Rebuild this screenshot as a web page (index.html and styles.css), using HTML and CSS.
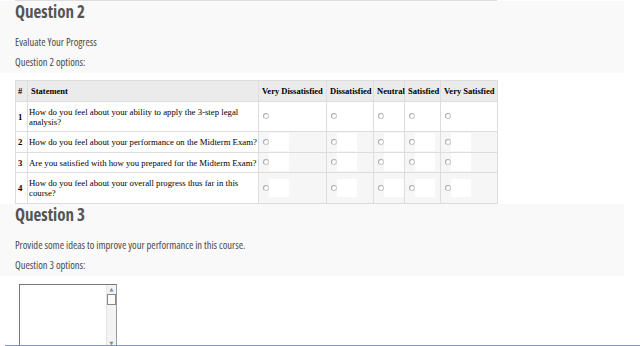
FILE: index.html
```html
<!DOCTYPE html>
<html lang="en">

<head>
  <meta charset="utf-8">
  <title>Course Survey</title>
  <link rel="stylesheet" href="styles.css">
</head>

<body>
<div class="prev-rule"></div>

<div class="question">
  <h2>Question 2</h2>
  <p>Evaluate Your Progress</p>
  <p>Question 2 options:</p>
</div>

<table class="likert">
  <colgroup>
    <col class="c-num">
    <col class="c-text">
    <col class="c-vd">
    <col class="c-d">
    <col class="c-n">
    <col class="c-s">
    <col class="c-vs">
  </colgroup>
  <tr>
    <th>#</th>
    <th>Statement</th>
    <th>Very Dissatisfied</th>
    <th>Dissatisfied</th>
    <th>Neutral</th>
    <th>Satisfied</th>
    <th>Very Satisfied</th>
  </tr>
  <tr>
    <td class="num">1</td>
    <td class="stmt">How do you feel about your ability to apply the 3-step legal analysis?</td>
    <td class="opt"><input type="radio" name="s1"><span class="pad"></span></td>
    <td class="opt"><input type="radio" name="s1"><span class="pad"></span></td>
    <td class="opt"><input type="radio" name="s1"><span class="pad"></span></td>
    <td class="opt"><input type="radio" name="s1"><span class="pad"></span></td>
    <td class="opt"><input type="radio" name="s1"><span class="pad"></span></td>
  </tr>
  <tr>
    <td class="num">2</td>
    <td class="stmt single">How do you feel about your performance on the Midterm Exam?</td>
    <td class="opt"><input type="radio" name="s2"><span class="pad"></span></td>
    <td class="opt"><input type="radio" name="s2"><span class="pad"></span></td>
    <td class="opt"><input type="radio" name="s2"><span class="pad"></span></td>
    <td class="opt"><input type="radio" name="s2"><span class="pad"></span></td>
    <td class="opt"><input type="radio" name="s2"><span class="pad"></span></td>
  </tr>
  <tr>
    <td class="num">3</td>
    <td class="stmt single">Are you satisfied with how you prepared for the Midterm Exam?</td>
    <td class="opt"><input type="radio" name="s3"><span class="pad"></span></td>
    <td class="opt"><input type="radio" name="s3"><span class="pad"></span></td>
    <td class="opt"><input type="radio" name="s3"><span class="pad"></span></td>
    <td class="opt"><input type="radio" name="s3"><span class="pad"></span></td>
    <td class="opt"><input type="radio" name="s3"><span class="pad"></span></td>
  </tr>
  <tr>
    <td class="num">4</td>
    <td class="stmt">How do you feel about your overall progress thus far in this course?</td>
    <td class="opt"><input type="radio" name="s4"><span class="pad"></span></td>
    <td class="opt"><input type="radio" name="s4"><span class="pad"></span></td>
    <td class="opt"><input type="radio" name="s4"><span class="pad"></span></td>
    <td class="opt"><input type="radio" name="s4"><span class="pad"></span></td>
    <td class="opt"><input type="radio" name="s4"><span class="pad"></span></td>
  </tr>
</table>

<div class="question">
  <h2>Question 3</h2>
  <p>Provide some ideas to improve your performance in this course.</p>
  <p>Question 3 options:</p>
</div>

<div class="answer">
  <textarea></textarea>
  <div class="scroll">
    <span class="arrow">&#9650;</span>
    <span class="thumb"></span>
    <span class="track"></span>
    <span class="arrow">&#9660;</span>
  </div>
</div>

<div class="frame-edge"></div>
</body>

</html>
```

FILE: styles.css
```css
body { background: white; margin: 0; padding: 0; overflow: hidden; height: 346px }

/* bottom border of the table above */
.prev-rule { border-top: 1px solid #ddd; margin-left: 15px; width: 482px }

/* Question header blocks */

.question {
  background: #f9f9f9;
  width: 609px;
  padding: 1px 0 5px 15px;
  font-family: "Open Sans", sans-serif;
  font-stretch: 75%;
  color: #4a4a4a;
}

.question h2 {
  margin: 0 0 14px;
  font-size: 17px;
  line-height: 20px;
  font-weight: bold;
  color: #555;
}

.question p {
  margin: 0 0 8px;
  font-size: 10.5px;
  line-height: 12px;
}

.question p:last-child { margin-bottom: 0 }

/* Likert table */

table.likert {
  border-collapse: collapse;
  table-layout: fixed;
  width: 482px;
  margin: 7px 0 0 15px;
  font-family: "Liberation Serif", "Times New Roman", serif;
  font-size: 8.75px;
  line-height: 10px;
  color: #000;
}

col.c-num { width: 12px }
col.c-text { width: 231px }
col.c-vd { width: 68px }
col.c-d { width: 47px }
col.c-n { width: 31px }
col.c-s { width: 36px }
col.c-vs { width: 57px }

table.likert th, table.likert td {
  border: 1px solid #ddd;
  padding: 5px 3px 4.5px;
  text-align: left;
  vertical-align: middle;
}

table.likert th { background: #ebebeb; font-size: 8.5px; font-weight: bold; white-space: nowrap }
table.likert th:first-child { padding: 5px 2px 4.5px }
table.likert td { background: white }
table.likert td.num { font-weight: bold; padding: 5px 2px 4.5px }
table.likert td.stmt { padding: 5px 0 4.5px 1px }
table.likert td.single { white-space: nowrap }
table.likert td.opt { padding: 0 0 0 4px; white-space: nowrap }
table.likert tr:nth-child(n+3) td.opt { background: #f6f6f6 }

table.likert input[type=radio] {
  -webkit-appearance: none;
  appearance: none;
  width: 6px;
  height: 6px;
  margin: 0;
  border: 1px solid #c8c8c8;
  border-top-color: #aaa;
  border-left-color: #aaa;
  border-radius: 50%;
  background: white;
  vertical-align: middle;
}

table.likert .pad {
  display: inline-block;
  width: 20px;
  height: 18px;
  background: white;
  vertical-align: middle;
}

/* Free text answer */

.answer {
  display: flex;
  width: 96px;
  height: 63px;
  margin: 8px 0 0 19px;
  border: 1px solid #999;
  border-top-color: #777;
  border-left-color: #777;
  background: white;
}

.answer textarea {
  flex: 1;
  border: none;
  margin: 0;
  padding: 0;
  resize: none;
  outline: none;
}

.scroll {
  display: flex;
  flex-direction: column;
  width: 9px;
  background: #f3f3f3;
  border-left: 1px solid #e4e4e4;
}

.scroll .arrow {
  height: 9px;
  font-size: 5px;
  line-height: 9px;
  text-align: center;
  color: #888;
  font-family: "DejaVu Sans", sans-serif;
}

.scroll .thumb {
  height: 9px;
  border: 1px solid #888;
  background: #fafafa;
}

.scroll .track { flex: 1 }

/* edge of the browser frame */
.frame-edge {
  position: fixed;
  left: 5px;
  right: 0;
  bottom: 0;
  height: 1px;
  background: #8297c9;
}
```
